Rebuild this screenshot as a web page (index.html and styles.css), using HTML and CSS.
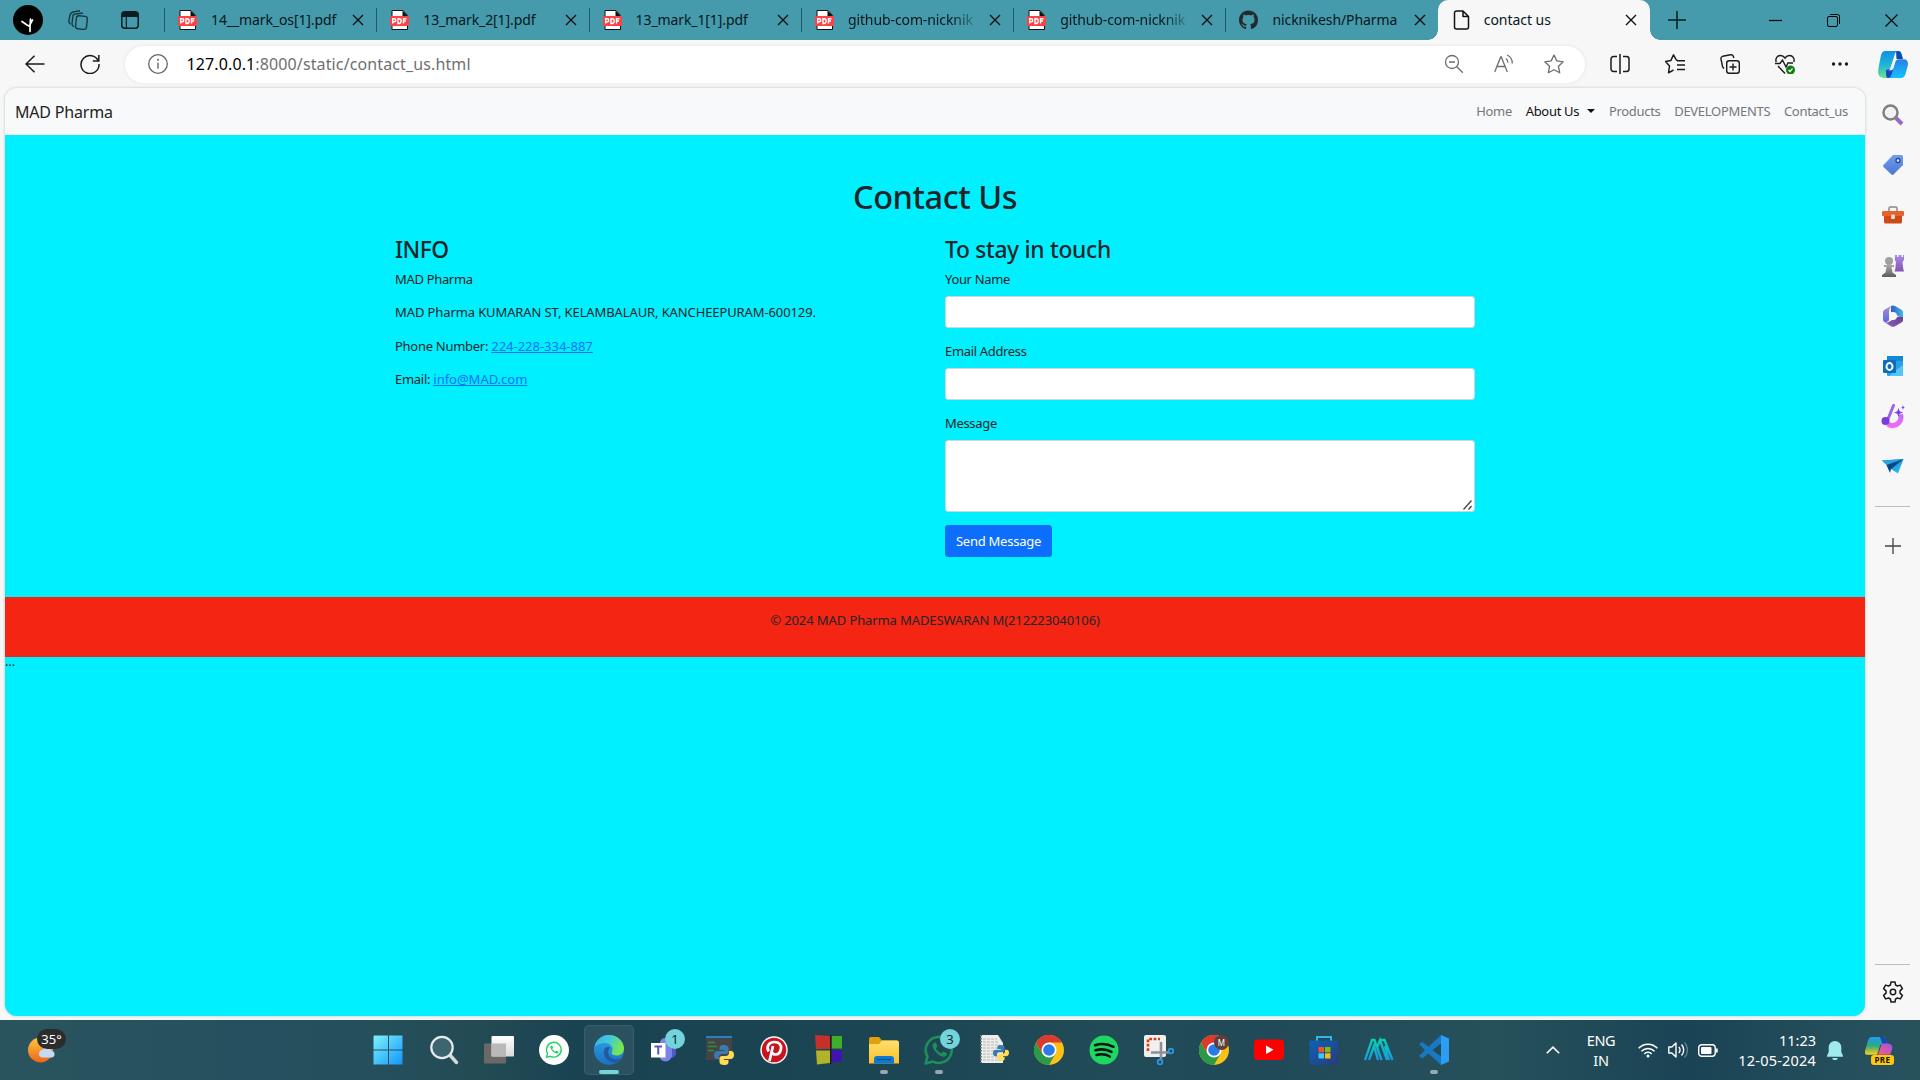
FILE: index.html
```html
<!DOCTYPE html>
<html lang="en">
<head>
<meta charset="utf-8">
<title>contact us</title>
<link rel="stylesheet" href="styles.css">
</head>
<body>
<svg class="defs" width="0" height="0">
  <defs>
    <linearGradient id="gWin" x1="0" y1="0" x2="1" y2="1"><stop offset="0" stop-color="#7df3fc"/><stop offset="1" stop-color="#1196fb"/></linearGradient>
    <linearGradient id="gSun" x1="0" y1="0" x2="0" y2="1"><stop offset="0" stop-color="#fbc93c"/><stop offset="1" stop-color="#f0641a"/></linearGradient>
    <linearGradient id="gEdgeTop" x1="0" y1="0" x2="1" y2=".4"><stop offset="0" stop-color="#2aa4e8"/><stop offset=".5" stop-color="#31c5d4"/><stop offset="1" stop-color="#6be63f"/></linearGradient>
    <linearGradient id="gEdgeLow" x1="0" y1="0" x2="0" y2="1"><stop offset="0" stop-color="#1aa0e6"/><stop offset="1" stop-color="#0a63bd"/></linearGradient>
    <linearGradient id="gCopA" x1="0" y1="0" x2="0" y2="1"><stop offset="0" stop-color="#0f8fe4"/><stop offset=".5" stop-color="#1cb5d8"/><stop offset="1" stop-color="#6ee38a"/></linearGradient>
    <linearGradient id="gCopB" x1="0" y1="0" x2="0" y2="1"><stop offset="0" stop-color="#2a7fe4"/><stop offset="1" stop-color="#12c3fb"/></linearGradient>
    <linearGradient id="gCopC" x1="0" y1="0" x2="0" y2="1"><stop offset="0" stop-color="#199ff0"/><stop offset=".5" stop-color="#2fa884"/><stop offset="1" stop-color="#ffd015"/></linearGradient>
    <linearGradient id="gCopD" x1="1" y1="0" x2="0" y2="1"><stop offset="0" stop-color="#9a55f0"/><stop offset="1" stop-color="#ff5a78"/></linearGradient>
    <linearGradient id="gTag" x1="0" y1="0" x2="0" y2="1"><stop offset="0" stop-color="#6f9df0"/><stop offset="1" stop-color="#4d78d0"/></linearGradient>
    <linearGradient id="gGray" x1="0" y1="0" x2="0" y2="1"><stop offset="0" stop-color="#aaa"/><stop offset="1" stop-color="#5c5c5c"/></linearGradient>
    <linearGradient id="gPurple" x1="0" y1="0" x2="0" y2="1"><stop offset="0" stop-color="#a98be6"/><stop offset="1" stop-color="#7f55b0"/></linearGradient>
    <linearGradient id="gBrush" x1="0" y1="0" x2="0" y2="1"><stop offset="0" stop-color="#c070f4"/><stop offset="1" stop-color="#f06af4"/></linearGradient>
    <linearGradient id="gPlane" x1="0" y1="0" x2="1" y2="1"><stop offset="0" stop-color="#0a6fc0"/><stop offset="1" stop-color="#35c8f8"/></linearGradient>
    <linearGradient id="gFolder" x1="0" y1="0" x2="0" y2="1"><stop offset="0" stop-color="#ffdf6c"/><stop offset="1" stop-color="#fbc02a"/></linearGradient>
    <linearGradient id="gStore" x1="0" y1="0" x2="1" y2="1"><stop offset="0" stop-color="#0b63b8"/><stop offset="1" stop-color="#2a3a78"/></linearGradient>
    <linearGradient id="gMa" x1="0" y1="0" x2="0" y2="1"><stop offset="0" stop-color="#08d0b4"/><stop offset="1" stop-color="#1899e0"/></linearGradient>
    <linearGradient id="gGreyView" x1="0" y1="0" x2="0" y2="1"><stop offset="0" stop-color="#fff"/><stop offset="1" stop-color="#dadada"/></linearGradient>
    <linearGradient id="gLoopA" x1="0" y1="0" x2="1" y2="0"><stop offset="0" stop-color="#2c5fc0"/><stop offset="1" stop-color="#45b4ee"/></linearGradient>
    <linearGradient id="gLoopB" x1="0" y1="0" x2="0" y2="1"><stop offset="0" stop-color="#b08ae0"/><stop offset="1" stop-color="#5a6ad8"/></linearGradient>
    <linearGradient id="gLoopC" x1="0" y1="1" x2="1" y2="0"><stop offset="0" stop-color="#8a60c8"/><stop offset="1" stop-color="#6a3f86"/></linearGradient>
    <symbol id="pdf" viewBox="0 0 19 20"><path d="M2 .5h11l4.500 5V19.500H2z" fill="#fff" stroke="#111"/><path d="M12.500.5v5.500H17.500z" fill="#111"/><rect y="6" width="19" height="10" rx="1" fill="#fb4347"/><path d="M2.700 13.500V8.700h1.600a1.400 1.400 0 0 1 0 3H2.700M8 8.700h1a2.200 2.400 0 0 1 0 4.800H8zM13.500 13.500V8.700h3M13.500 11h2.500" fill="none" stroke="#fff" stroke-width="1.400"/></symbol>
    <symbol id="x" viewBox="0 0 12 12"><path d="M1 1l10 10M11 1L1 11" stroke="#111" stroke-width="1.400" fill="none"/></symbol>
    <symbol id="python" viewBox="0 0 20 20"><path d="M9.800 0C6 0 5.500 1.500 5.500 3v2H10v1H3.500C1.500 6 0 7.500 0 10s1 4 3 4h2v-2.500C5.500 10 6.500 9 8 9h4c1.500 0 2.500-1 2.500-2.500V3C14.500 1 13 0 9.800 0z" fill="#3a7ab0"/><path d="M10.200 20c3.800 0 4.300-1.500 4.300-3v-2H10v-1h6.500c2 0 3.500-1.500 3.500-4s-1-4-3-4h-2v2.500C14.500 10 13.500 11 12 11H8c-1.500 0-2.500 1-2.500 2.500V17c0 2 1.500 3 4.700 3z" fill="#ffdc50"/></symbol>
    <symbol id="chrome" viewBox="0 0 30 30"><circle cx="15" cy="15" r="15" fill="#fbc116"/><path d="M2 7.500A15 15 0 0 0 15 30l6.500-11.250L15 15 8.500 18.750z" fill="#2a9a4a"/><path d="M2 7.500A15 15 0 0 1 28 7.500H15L8.500 18.750z" fill="#dd3a2e"/><circle cx="15" cy="15" r="7.500" fill="#fff"/><circle cx="15" cy="15" r="5.800" fill="#2a7bea"/></symbol>
    <symbol id="wa" viewBox="0 0 30 30"><path d="M1.500 28.500l2-7A13 13 0 1 1 9 26.600z" fill="none" stroke="currentColor" stroke-width="2.600" stroke-linejoin="round"/><path d="M10.500 7.500c-3 1.500-2 5 .5 8.500 3 4 7 6.500 10 5.500 2-1 2.300-3 1.500-3.500l-3-1.500c-1 0-1.300 1.500-2 1.700-1.500 0-5-3-5.500-5 .2-.8 1.500-1.200 1.300-2.200l-1.300-3.200z" fill="currentColor"/></symbol>
  </defs>
</svg>

<header class="tabstrip">
  <div class="tabstrip-lead">
    <svg class="avatar" viewBox="0 0 30 30"><circle cx="15" cy="15" r="15" fill="#000"/><path d="M17 26.500V22l.5-8M17 21.500L14 20 9 16.500M17 19.500l2.500-4.500" stroke="#fff" stroke-width="1.700" fill="none" stroke-linecap="round"/></svg>
    <svg class="i-work" viewBox="0 0 22 20" fill="none" stroke="#173a44" stroke-width="1.400"><rect x="9" y="6" width="11" height="13" rx="2.500" transform="rotate(6 14 12)"/><path d="M7 16.500C5 16 5 15 5 14l.8-7.500C6 4.500 7 4 8.500 4L16 3M3.500 14C1.500 13 1.500 12 2 10l1-5c.4-2 1-2.500 3-3L13 .8"/></svg>
    <svg class="i-tabs" viewBox="0 0 18 18"><rect x=".8" y=".8" width="16.400" height="16.400" rx="3" fill="none" stroke="#0b1d22" stroke-width="1.500"/><path d="M1 6V3.500A2.500 2.500 0 0 1 3.500 1h11A2.500 2.500 0 0 1 17 3.500V6z" fill="#0b1d22"/><path d="M5.300 6v11" stroke="#0b1d22" stroke-width="1.200"/></svg>
  </div>
  <div class="tab"><svg class="pdf"><use href="#pdf"/></svg><span class="tab-title">14__mark_os[1].pdf</span><svg class="x"><use href="#x"/></svg></div>
  <div class="tab"><svg class="pdf"><use href="#pdf"/></svg><span class="tab-title">13_mark_2[1].pdf</span><svg class="x"><use href="#x"/></svg></div>
  <div class="tab"><svg class="pdf"><use href="#pdf"/></svg><span class="tab-title">13_mark_1[1].pdf</span><svg class="x"><use href="#x"/></svg></div>
  <div class="tab"><svg class="pdf"><use href="#pdf"/></svg><span class="tab-title fade">github-com-nicknik</span><svg class="x"><use href="#x"/></svg></div>
  <div class="tab"><svg class="pdf"><use href="#pdf"/></svg><span class="tab-title fade">github-com-nicknik</span><svg class="x"><use href="#x"/></svg></div>
  <div class="tab"><svg class="pdf" viewBox="0 0 16 16"><path fill="#24292f" d="M8 0C3.580 0 0 3.580 0 8c0 3.540 2.290 6.530 5.470 7.590.4.070.55-.17.55-.38 0-.19-.01-.82-.01-1.490-2.010.37-2.530-.49-2.690-.94-.09-.23-.48-.94-.82-1.130-.28-.15-.68-.52-.01-.53.63-.01 1.080.58 1.230.82.72 1.210 1.870.87 2.330.66.07-.52.28-.87.51-1.070-1.780-.2-3.640-.89-3.640-3.950 0-.87.31-1.590.82-2.150-.08-.2-.36-1.020.08-2.120 0 0 .67-.21 2.200.82.64-.18 1.320-.27 2-.27s1.360.09 2 .27c1.530-1.040 2.200-.82 2.200-.82.44 1.100.16 1.920.08 2.120.51.56.82 1.270.82 2.150 0 3.070-1.870 3.750-3.650 3.950.29.25.54.73.54 1.480 0 1.070-.01 1.930-.01 2.200 0 .21.15.46.55.38A8.010 8.010 0 0 0 16 8c0-4.420-3.580-8-8-8z"/></svg><span class="tab-title">nicknikesh/Pharma</span><svg class="x"><use href="#x"/></svg></div>
  <div class="tab active"><svg class="pdf" viewBox="0 0 19 20"><path d="M4.500 1H11l5.500 5.500V17a2 2 0 0 1-2 2h-10a2 2 0 0 1-2-2V3a2 2 0 0 1 2-2zM11 1v5.500h5.500" fill="none" stroke="#111" stroke-width="1.500" stroke-linejoin="round"/></svg><span class="tab-title">contact us</span><svg class="x"><use href="#x"/></svg></div>
  <svg class="i-plus" viewBox="0 0 18 18"><path d="M9 0v18M0 9h18" stroke="#0b1d22" stroke-width="1.500"/></svg>
  <div class="winctl">
    <svg viewBox="0 0 13 13"><path d="M0 6.500h13" stroke="#000" stroke-width="1.200"/></svg>
    <svg viewBox="0 0 13 13" fill="none" stroke="#000"><rect x=".5" y="2.500" width="10" height="10" rx="1.500"/><path d="M3 .5h7.500a2 2 0 0 1 2 2V10"/></svg>
    <svg viewBox="0 0 13 13"><path d="M.5.5l12 12M12.500.5l-12 12" stroke="#000" stroke-width="1.100"/></svg>
  </div>
</header>

<div class="toolbar">
  <svg class="i-back" viewBox="0 0 20 18"><path d="M19.500 9H1M9.500.7L1 9l8.500 8.300" fill="none" stroke="#1b1b1b" stroke-width="1.500"/></svg>
  <svg class="i-reload" viewBox="0 0 20 20"><path d="M18.300 7A9 9 0 1 0 19 10M18.800 1v6h-6" fill="none" stroke="#1b1b1b" stroke-width="1.500"/></svg>
  <div class="omnibox">
    <svg class="i-info" viewBox="0 0 20 20"><circle cx="10" cy="10" r="9.300" fill="none" stroke="#666" stroke-width="1.300"/><path d="M10 8.700v6" stroke="#666" stroke-width="1.400"/><circle cx="10" cy="5.800" r="1" fill="#666"/></svg>
    <span class="url"><i>127.0.0.1</i>:8000/static/contact_us.html</span>
    <svg viewBox="0 0 20 20" fill="none" stroke="#6e6e6e" stroke-width="1.300"><circle cx="8" cy="8" r="6.500"/><path d="M5 8h6M12.800 12.800l6 6"/></svg>
    <svg viewBox="0 0 20 20" fill="none" stroke="#6e6e6e" stroke-width="1.300"><path d="M.7 18L6.700 3h.6l6 15M3 12.500h8M12 4.500c1.200 1 1.800 2.300 1.800 4M13 1c3.500 1.500 5.300 4.500 5.300 8.500"/></svg>
    <svg viewBox="0 0 20 20" fill="none" stroke="#6e6e6e" stroke-width="1.300" stroke-linejoin="round"><path d="M10 1l2.800 5.900 6.400.9-4.700 4.500 1.200 6.500-5.700-3.100-5.700 3.100 1.200-6.500L.8 7.800l6.400-.9z"/></svg>
  </div>
  <div class="tools">
    <svg viewBox="0 0 20 20" fill="none" stroke="#1b1b1b" stroke-width="1.500"><path d="M7 2.500H3.500a2.500 2.500 0 0 0-2.500 2.500v10a2.500 2.500 0 0 0 2.500 2.500H7M13 2.500h3.500A2.500 2.500 0 0 1 19 5v10a2.500 2.500 0 0 1-2.500 2.500H13M10 0v20"/></svg>
    <svg viewBox="0 0 20 20" fill="none" stroke="#1b1b1b" stroke-width="1.500" stroke-linejoin="round"><path d="M12.500 6.200l-1.200-.2L8.500.8 5.800 6.600.5 7.500l4 4.500-1 6.800L8.500 16M12 6.700h8M12 11h8M12 15.500h8"/></svg>
    <svg viewBox="0 0 20 20" fill="none" stroke="#1b1b1b" stroke-width="1.400"><rect x="6.700" y="6.700" width="12.600" height="12.600" rx="2.500"/><path d="M13 9.500v7M9.500 13h7M4 14.500L2.600 13 1 5.200c-.3-1.500.3-2.500 1.700-2.900L10.500.8c1.500-.3 2.500.5 2.900 1.700l.4 1.500"/></svg>
    <svg viewBox="0 0 20 20" fill="none" stroke="#1b1b1b" stroke-width="1.400"><path d="M1.200 8C0 4.500 2.500 1.500 5.300 1.500 7.500 1.500 9 2.500 10 4c1-1.500 2.500-2.500 4.700-2.500 2.800 0 5.300 3 4.100 6.500M0 9.500h5L7.500 6l3.500 7 2-4h5M3 12l7 7.500"/><circle cx="15.500" cy="16" r="4.500" fill="#107c10" stroke="none"/><path d="M13.500 16l1.500 1.500 2.500-3" stroke="#fff" stroke-width="1.200"/></svg>
    <svg viewBox="0 0 20 20" fill="#1b1b1b"><circle cx="3.500" cy="10" r="1.700"/><circle cx="10" cy="10" r="1.700"/><circle cx="16.500" cy="10" r="1.700"/></svg>
  </div>
  <svg class="copilot" viewBox="0 0 30 27"><path d="M18 0h2.500c1.500 0 2.500 1 3 2.800L25 8h-6.500z" fill="#0b4fae"/><path d="M8 27h3c2 0 3-1 3.500-3l2-7-6 1H7.500z" fill="#1746c8"/><path d="M7 0h12.500c-1.500.5-2.300 1.700-2.800 3.500L13 15.500c-.7 2-1.800 3-3.500 3C7 18.500 7 24 9.500 27 6 27 1 27.500.2 22.500-.2 19.500 1.500 12 2.600 6 3.400 2 4.500 0 7 0z" fill="url(#gCopA)"/><path d="M23 27H10.500c1.500-.5 2.500-1.700 3-3.500L17 11.500c.7-2.300 1.800-3.300 3.500-3.300h5.200c3.500 0 4.800 2.500 4.100 6.300l-2 7.500C27 25.500 25.500 27 23 27z" fill="url(#gCopB)"/><path d="M16.500 8.200h4c-1.800.2-2.800 1.300-3.500 3.300l-2 6.500c-.5 1-1.200 1.300-2.200 1.300h-3c1.800-.3 2.700-1.300 3.200-2.800l2-6.300c.4-1.200.9-1.800 1.500-2z" fill="#f7f7f7"/></svg>
</div>

<div class="middle">
  <main class="page">
    <nav class="navbar">
      <span class="brand">MAD Pharma</span>
      <div class="links"><a>Home</a><a class="on">About Us</a><a>Products</a><a>DEVELOPMENTS</a><a>Contact_us</a></div>
    </nav>
    <section class="contact">
      <h1>Contact Us</h1>
      <div class="cols">
        <div class="col">
          <h2 class="info">INFO</h2>
          <p class="label">MAD Pharma</p>
          <p class="address">MAD Pharma KUMARAN ST, KELAMBALAUR, KANCHEEPURAM-600129.</p>
          <p><span class="key">Phone Number: </span><a>224-228-334-887</a></p>
          <p><span class="key">Email: </span><a>info@MAD.com</a></p>
        </div>
        <form class="col">
          <h2>To stay in touch</h2>
          <label class="label">Your Name</label><input type="text">
          <label class="label">Email Address</label><input type="text">
          <label class="label">Message</label>
          <div class="area"><textarea></textarea><svg class="grip" viewBox="0 0 10 10"><path d="M.5 9.500l8-9M5.500 9.500l3-3.500" stroke="#444" stroke-width="1.300"/></svg></div>
          <button type="button">Send Message</button>
        </form>
      </div>
    </section>
    <footer>© 2024 MAD Pharma MADESWARAN M(212223040106)</footer>
    <div class="rest">...</div>
  </main>
  <aside class="sidebar">
    <svg viewBox="0 0 22 22"><path d="M14 14l6 6" stroke="#9a68cc" stroke-width="4"/><circle cx="8.500" cy="8.500" r="7" fill="#f2f2f2" stroke="#808080" stroke-width="2.500"/></svg>
    <svg viewBox="0 0 22 22"><path d="M11 1h8.500A1.500 1.500 0 0 1 21 2.500V11L11.500 20.500a1.500 1.500 0 0 1-2 0L1.500 13a1.500 1.500 0 0 1 0-2z" fill="url(#gTag)"/><circle cx="16" cy="6.500" r="2" fill="#e4ebfa" stroke="#27459b" stroke-width="1.300"/></svg>
    <svg viewBox="0 0 22 22"><path d="M7 7V4.500C7 3.500 7.500 3 8.500 3h5c1 0 1.500.5 1.500 1.500V7" fill="none" stroke="#888" stroke-width="1.500"/><rect y="7" width="22" height="5" rx="1" fill="#e8622c"/><path d="M2 12h18v6a1.500 1.500 0 0 1-1.500 1.500h-15A1.500 1.500 0 0 1 2 18z" fill="#d04a14"/><rect x="9" y="10.500" width="4" height="4.500" rx="1" fill="#d9d9d9"/></svg>
    <svg viewBox="0 0 22 22"><path d="M13 0h2v2h1.500V0h3v2H21V0h1v5l-1.500 2 .8 7 .7 2.500H12.500L13.300 14l.7-7-1.200-2z" fill="url(#gPurple)"/><circle cx="7" cy="6" r="4" fill="#a0a0a0"/><path d="M2 10h10v2H9.500l1 5.500 3.500 2.500V22H0v-2l3.500-2.500L4.500 12H2z" fill="url(#gGray)"/></svg>
    <svg viewBox="0 0 22 22"><path d="M9 1.200C10 .3 12 .3 13 1l6.500 3.700C20.500 5.300 21 6 21 7v7l-7-4-5-3z" fill="url(#gLoopA)"/><path d="M2.500 4.700L9.500.7C7.500 3 7 5 7 7.500v8l-3 2C2 17.500 1 16 1 14.500V7.500c0-1.200.5-2.200 1.500-2.800z" fill="url(#gLoopB)"/><path d="M21 12v3c0 1-.5 2-1.500 2.600L13 21.300c-1.200.7-2.800.7-4 0l-6-3.800c2 .3 3.500-.3 5-1.200l7-4.300z" fill="url(#gLoopC)"/><circle cx="11" cy="11" r="4" fill="#f7f7f7"/></svg>
    <svg viewBox="0 0 22 22"><rect x="5" y="1" width="16" height="20" rx="1" fill="#28a0e4"/><path d="M5 1h16v5H5z" fill="#1488d4"/><path d="M14 15l7-5v11H7z" fill="#54c6f4"/><rect x="1" y="5" width="13" height="13" rx="1" fill="#0b6cc4"/><ellipse cx="7.500" cy="11.500" rx="3" ry="3.500" fill="none" stroke="#fff" stroke-width="1.900"/></svg>
    <svg class="wide" viewBox="0 0 24 24"><path d="M7 20c3 2.500 8 2 11-1.500 2-2.300 2.500-5 1.500-8" fill="none" stroke="url(#gBrush)" stroke-width="5"/><path d="M12.500 1.500L7 15" stroke="#9b63ee" stroke-width="3" stroke-linecap="round"/><circle cx="4.500" cy="17" r="4" fill="#7a3ae0"/><path d="M17.500 4l1.200 3.300L22 8.500l-3.300 1.200-1.200 3.300-1.200-3.300L13 8.500l3.300-1.200zM22 1l.6 1.900 1.400.6-1.400.6L22 6l-.6-1.900L20 3.500l1.400-.6z" fill="#7d3df0"/></svg>
    <svg viewBox="0 0 22 22"><path d="M0 5.500L21.500 4 16 18.500 9 14z" fill="url(#gPlane)"/><path d="M0 5.500L21.500 4 7 12z" fill="#2ba4e0"/><path d="M4.500 10L21.500 4 9 14l-1 4z" fill="#0a4686"/></svg>
    <hr>
    <svg class="add" viewBox="0 0 16 16"><path d="M8 0v16M0 8h16" stroke="#444" stroke-width="1.300"/></svg>
    <div class="grow"></div>
    <hr>
    <svg class="gear" viewBox="0 0 22 22" fill="none" stroke="#1b1b1b" stroke-width="1.500" stroke-linejoin="round"><circle cx="11" cy="11" r="2.700"/><path d="M9 1h4l.6 3 1.800 1 3-.9 2 3.500L18 9.900v2.200l2.400 2.300-2 3.500-3-.9-1.800 1L13 21H9l-.6-3-1.800-1-3 .9-2-3.500L4 12.100V9.900L1.600 7.600l2-3.500 3 .9 1.800-1z"/></svg>
  </aside>
</div>

<footer class="taskbar">
  <div class="weather"><svg viewBox="0 0 28 26"><circle cx="12.500" cy="13" r="12.500" fill="url(#gSun)"/><path d="M14 20.500a3.800 3.800 0 0 1 .5-7.500 5 5 0 0 1 9 1 3.300 3.300 0 0 1 .5 6.500z" fill="#c4d8f8"/></svg><span class="temp">35°</span></div>
  <div class="apps">
    <div class="app"><svg class="win" viewBox="0 0 30 30" fill="url(#gWin)"><path d="M1.500.5H15v14H.5v-13zM16 .5h13.500v14H16zM.5 15.500H15v14H.5zM16 15.500h13.500v14H16z"/></svg></div>
    <div class="app"><svg viewBox="0 0 30 30"><path d="M20 19l7.500 8.500" stroke="#d6d9da" stroke-width="3.500" stroke-linecap="round"/><circle cx="13" cy="12.500" r="10.700" fill="#3d656f" stroke="#e9ecec" stroke-width="2.200"/></svg></div>
    <div class="app"><svg viewBox="0 0 30 30"><rect x="0" y="8.500" width="22" height="20" rx="1" fill="#6b6867"/><rect x="7.500" y="1" width="22.500" height="20.500" rx="1" fill="url(#gGreyView)"/><path d="M7.500 8.500H22v13H7.500z" fill="#b9b9b9"/></svg></div>
    <div class="app"><svg viewBox="0 0 30 30"><circle cx="15" cy="15" r="15" fill="#fff"/><svg x="6.500" y="6" width="17" height="17.500" color="#25d366"><use href="#wa"/></svg></svg></div>
    <div class="app current"><svg viewBox="0 0 30 30"><circle cx="15" cy="15" r="15" fill="url(#gEdgeLow)"/><path d="M.5 12C2 4.500 8 0 15 0c8 0 15 6 15 13.500 0 4.500-3.500 7-7.500 7-3 0-5-1.200-5-2.500 0-1 1-1.500 1-4 0-3-3-6-7.500-6C6.500 8 2.500 10 .5 12z" fill="url(#gEdgeTop)"/><path d="M10.500 14C8 20 13 27 20 27.500c3 0 5.500-2 7.500-4-4 1.500-11 1.500-13-4-.8-2.500 0-5.500 1.500-7-2.500-1-5 0-5.500 1.500z" fill="#114a9c"/></svg><i class="run"></i></div>
    <div class="app"><svg viewBox="0 0 30 30"><circle cx="16" cy="8" r="5" fill="#7b83eb"/><path d="M19 10h8v8a5 5 0 0 1-5 5h-3z" fill="#5059c9"/><path d="M10 10h13v10a6.500 6.500 0 0 1-13 0z" fill="#7b83eb"/><rect x="2" y="8" width="14.500" height="14.500" fill="#fff"/><path d="M5.500 11.500h7.500M9.250 11.500v8" stroke="#5059c9" stroke-width="2"/></svg><span class="badge">1</span></div>
    <div class="app"><svg viewBox="0 0 30 30"><rect x="2" y="2" width="26" height="23" fill="#444"/><rect x="2" y="1" width="26" height="2" fill="#2f7fc0"/><path d="M4 7.500h7M4 11.500h9M4 15.500h6" stroke="#2f8a3c" stroke-width="1.300"/><svg x="10" y="10" width="20" height="20"><use href="#python"/></svg></svg></div>
    <div class="app"><svg viewBox="0 0 30 30"><circle cx="15" cy="15" r="13.700" fill="#fff"/><circle cx="15" cy="15" r="12.300" fill="#c8141d"/><path d="M14 11l-3.500 15M9.700 16.500C7 12 9.500 7 15.500 7c4.500 0 7 3 6.500 6.500-.5 4-3 6-5.500 6-1.700 0-2.800-.8-3.200-2" fill="none" stroke="#fff" stroke-width="2.700"/></svg></div>
    <div class="app"><svg viewBox="0 0 30 30"><path d="M1 0l15 1v13L2 14z" fill="#c6302c"/><path d="M17.500 1H28v12.500H17.500z" fill="#3fae2c"/><path d="M2 15.500h14V28L3 29.500z" fill="#b3b32a"/><path d="M17.500 15H28v11l-10.500 2z" fill="#4114b0"/><path d="M16 0h1.500v29H16z" fill="#1c1c1c"/></svg></div>
    <div class="app"><svg viewBox="0 0 30 30"><path d="M0 4a2 2 0 0 1 2-2h8l3 3.500h15v6H0z" fill="#dfa00c"/><path d="M0 9h10l3-3.500h15a2 2 0 0 1 2 2V28.500H0z" fill="url(#gFolder)"/><path d="M5 28.500V24a3 3 0 0 1 3-3h14a3 3 0 0 1 3 3v4.500z" fill="#0b7ad4"/><path d="M8 24.500h14" stroke="#0a4f92" stroke-width="1.200"/></svg><i class="run dim"></i></div>
    <div class="app"><svg viewBox="0 0 30 30" color="#1e8f58"><use href="#wa"/></svg><span class="badge">3</span><i class="run dim"></i></div>
    <div class="app"><svg viewBox="0 0 30 30"><path d="M2 0h17l5 8v20H2z" fill="#ededed"/><path d="M4 4h14M4 7h16M4 10h17M4 13h18M4 16h12M4 19h14M4 22h17M4 25h18" stroke="#b8b8b8" stroke-dasharray="3 1"/><path d="M2 0v28" stroke="#777" stroke-dasharray="1.500 1.500" stroke-width="2"/><svg x="14" y="10" width="16" height="16"><use href="#python"/></svg></svg></div>
    <div class="app"><svg><use href="#chrome"/></svg></div>
    <div class="app"><svg viewBox="0 0 30 30"><circle cx="15" cy="15" r="14.500" fill="#1ed760"/><path d="M6 10.200c6-1.800 13-1.300 18.500 1.600M6.500 15.300c5.500-1.500 11.500-1 16 1.600M7.500 20c4.500-1.100 9.500-.7 13.300 1.500" fill="none" stroke="#111" stroke-width="2.500" stroke-linecap="round"/></svg></div>
    <div class="app"><svg viewBox="0 0 30 30"><rect width="22" height="22" rx="2" fill="#f0f0f0"/><path d="M4 16V4h12" fill="none" stroke="#d8400a" stroke-width="2.600" stroke-dasharray="2.800 1.600"/><path d="M17 7v17M7 17.500h18" stroke="#8a9096" stroke-width="2.600"/><circle cx="27" cy="16" r="2.400" fill="none" stroke="#2a9ae8" stroke-width="1.700"/><circle cx="16" cy="27" r="2.400" fill="none" stroke="#2a9ae8" stroke-width="1.700"/></svg></div>
    <div class="app"><svg><use href="#chrome"/></svg><span class="who">M</span></div>
    <div class="app"><svg viewBox="0 0 30 30"><rect y="4.500" width="30" height="20.500" rx="4" fill="#f00"/><path d="M12 10.500l7.500 4.300-7.500 4.300z" fill="#fff"/></svg></div>
    <div class="app"><svg viewBox="0 0 30 30"><path d="M8 6V2h14v4" fill="none" stroke="#2fb4f0" stroke-width="2"/><path d="M.5 5.500h29V26a4 4 0 0 1-4 4h-21a4 4 0 0 1-4-4z" fill="url(#gStore)"/><path d="M9.500 12H15v5.300H9.500z" fill="#f35325"/><path d="M16 12h5.500v5.300H16z" fill="#81bc06"/><path d="M9.500 18.300H15v5.200H9.500z" fill="#3cc8fa"/><path d="M16 18.300h5.500v5.200H16z" fill="#ffba08"/></svg></div>
    <div class="app"><svg viewBox="0 0 30 30" fill="none" stroke="url(#gMa)" stroke-width="2.300"><path d="M1 25L8 5h2.500l7 20M5 25l5-14 4 14M13 13l3-8 7 20M17 5h3.500l8 20M21 11l4 14"/></svg></div>
    <div class="app"><svg viewBox="0 0 30 30"><path d="M22 0L9.500 11.700 3.500 7 0 9l6 6-6 6 3.500 2.500 6-5L22 30z" fill="#1a78c2"/><path d="M22 8.500L13.500 15 22 21.500z" fill="#214b58"/><path d="M22 0l8 3.500v23L22 30z" fill="#2a9df4"/></svg><i class="run dim"></i></div>
  </div>
  <div class="tray">
    <svg class="chev" viewBox="0 0 14 8"><path d="M.8 7.300L7 1.200l6.200 6.100" fill="none" stroke="#fff" stroke-width="1.600"/></svg>
    <div class="lang">ENG<br>IN</div>
    <svg class="wifi" viewBox="0 0 20 16" fill="none" stroke="#fff" stroke-width="1.500"><path d="M.6 6.300a13 13 0 0 1 18.800 0M3.500 9.200a9 9 0 0 1 13 0M6.300 12a5 5 0 0 1 7.400 0"/><circle cx="10" cy="14" r="1.500" fill="#fff" stroke="none"/></svg>
    <svg class="vol" viewBox="0 0 20 16" fill="none" stroke="#fff" stroke-width="1.400"><path d="M.8 5h3L8 1v14l-4.200-4h-3z" stroke-linejoin="round"/><path d="M10.700 5a4 4 0 0 1 0 6M13.500 2.500a8 8 0 0 1 0 11"/><path d="M16.500.5a11 11 0 0 1 0 15" stroke="#58808a"/></svg>
    <svg class="bat" viewBox="0 0 20 13"><rect x=".7" y=".7" width="16.500" height="11.600" rx="3" fill="none" stroke="#fff" stroke-width="1.400"/><rect x="3" y="3" width="10.500" height="7" rx="1" fill="#fff"/><path d="M18.700 4.500v4" stroke="#fff" stroke-width="2"/></svg>
    <div class="clock">11:23<br><span class="date">12-05-2024</span></div>
    <svg class="bell" viewBox="0 0 16 19"><path d="M8 0a6.300 6.300 0 0 1 6.300 6.300V11L16 14.800v1H0v-1L1.700 11V6.300A6.300 6.300 0 0 1 8 0zM5.300 17h5.400a2.700 2.200 0 0 1-5.400 0z" fill="#a0e9ec"/></svg>
    <div class="pre"><svg viewBox="0 0 30 27"><path d="M7 0h12c2 0 3 1 3.500 3L24 8h-5c-2 0-3 1-3.500 3L13 19H2C0 19-.5 17 .3 14L3 4.500C4 1.500 5 0 7 0z" fill="url(#gCopC)"/><path d="M16 0h3c2 0 3 1 3.500 3L24 8h-5z" fill="#1a44b8"/><path d="M14 19l3-9c1-2.500 2-3 5-3 6 0 8 2 7 6l-2 6z" fill="url(#gCopD)"/></svg><span>PRE</span></div>
  </div>
</footer>
</body>
</html>
```
FILE: styles.css
```css
* { box-sizing: border-box; }
body { margin: 0; width: 1920px; height: 1080px; overflow: hidden; display: flex; flex-direction: column; background: #f7f7f7; font-family: "Noto Sans", "Open Sans", sans-serif; color: #212529; }
i { font-style: normal; }
svg { display: block; flex: none; }
.defs { position: absolute; }

/* tab strip */
.tabstrip { height: 40px; flex: none; display: flex; align-items: center; background: #459aac; }
.tabstrip-lead { width: 164px; height: 40px; display: flex; align-items: center; padding-left: 13px; }
.avatar { width: 30px; height: 30px; }
.i-work { width: 22px; height: 20px; margin-left: 24px; }
.i-tabs { width: 18px; height: 18px; margin-left: 32px; }
.tab { width: 212.300px; height: 40px; flex: none; display: flex; align-items: center; padding: 0 12px 0 13px; border-left: 1px solid transparent; background: linear-gradient(#1f5b68, #1f5b68) 0 50% / 1px 24px no-repeat border-box; }
.pdf { width: 19px; height: 20px; }
.x { width: 12px; height: 12px; }
.tab-title { flex: 1; white-space: nowrap; margin: 0 9px 0 14px; font-size: 14px; line-height: 24px; letter-spacing: -.1px; color: #08171b; }
.fade { -webkit-mask-image: linear-gradient(90deg, #000 78%, transparent 101%); mask-image: linear-gradient(90deg, #000 78%, transparent 101%); }
.tab.active { background: #f7f7f7; border-radius: 10px 10px 0 0; position: relative; padding-right: 13px; }
.tab.active .tab-title { letter-spacing: -.05px; margin-left: 13px; }
.tab.active::before, .tab.active::after { content: ""; position: absolute; bottom: 0; width: 10px; height: 10px; }
.tab.active::before { left: -11px; background: radial-gradient(circle at 0 0, #459aac 9.500px, #f7f7f7 10px); }
.tab.active::after { right: -10px; background: radial-gradient(circle at 100% 0, #459aac 9.500px, #f7f7f7 10px); }
.i-plus { width: 18px; height: 18px; margin-left: 18px; }
.winctl { margin-left: auto; display: flex; gap: 45px; padding-right: 22px; }
.winctl svg { width: 13px; height: 13px; }

/* address bar */
.toolbar { height: 47px; flex: none; display: flex; align-items: center; padding: 1px 12px 0 25px; }
.i-back { width: 20px; height: 18px; }
.i-reload { width: 20px; height: 20px; margin-left: 35px; }
.omnibox { width: 1460px; height: 37px; margin-left: 25px; border-radius: 19px; background: #fff; box-shadow: 0 0 3px 1px #ececec; display: flex; align-items: center; padding: 0 21px 0 22.500px; gap: 30px; }
.omnibox svg { width: 20px; height: 20px; }
.url { flex: 1; margin-left: -11px; font-size: 16px; line-height: 24px; letter-spacing: .12px; color: #6f6f6f; }
.url i { color: #000; }
.tools { display: flex; gap: 35px; margin-left: 25px; }
.tools svg { width: 20px; height: 20px; }
.copilot { width: 30px; height: 27px; margin-left: auto; }

/* viewport and side panel */
.middle { flex: 1; min-height: 0; display: flex; padding: 1px 0 4px 5px; }
.page { width: 1860px; border-radius: 12px; overflow: hidden; background: #00f0ff linear-gradient(#f8f9fa, #f8f9fa) 0 0 / 100% 24px no-repeat; box-shadow: 0 0 3px #bdbdbd; font-size: 13px; line-height: 20px; letter-spacing: -.13px; display: flex; flex-direction: column; }
.navbar { height: 47px; flex: none; display: flex; align-items: center; justify-content: space-between; background: #f8f9fa; padding: 0 17px 1px 10px; }
.brand { font-size: 16px; letter-spacing: -.2px; color: #222; padding-top: 1px; }
.links { display: flex; gap: 13.700px; letter-spacing: -.3px; color: #767778; }
.links .on { color: #111; display: flex; align-items: center; }
.on::after { content: ""; margin-left: 8px; border: 4px solid transparent; border-top-color: #111; border-bottom: 0; }
.contact { height: 462px; padding-top: 40px; flex: none; }
h1, h2, p { margin: 0; font-weight: 500; }
h1 { font-size: 32.500px; line-height: 44px; letter-spacing: -.45px; text-align: center; }
.cols { display: flex; gap: 20px; width: 1080px; margin: 17px auto 0; }
.col { width: 530px; display: flex; flex-direction: column; align-items: flex-start; }
h2 { font-size: 22.800px; line-height: 28px; letter-spacing: -.3px; margin-bottom: 5px; }
h2.info { letter-spacing: -.5px; }
p { font-weight: 400; margin-bottom: 13.330px; }
.label { letter-spacing: -.33px; }
.address { letter-spacing: -.11px; }
.key { letter-spacing: -.28px; white-space: pre; }
.col a { color: #0d6efd; text-decoration: underline; letter-spacing: -.02px; }
label { margin-bottom: 7.300px; }
input, textarea { width: 530px; height: 32px; margin: 0; border: 1px solid #ced4da; border-radius: 3.330px; background: #fff; padding: 0; }
input { margin-bottom: 12.600px; }
textarea { display: block; height: 72px; resize: none; }
.area { position: relative; margin-bottom: 13px; }
.grip { position: absolute; right: 2px; bottom: 2px; width: 10px; height: 10px; }
button { width: 107px; height: 32px; border: 0; border-radius: 3.330px; background: #0d6efd; color: #fff; font: inherit; letter-spacing: -.25px; padding: 0; white-space: nowrap; }
.page footer { height: 60px; flex: none; background: #f42512; text-align: center; padding-top: 13px; letter-spacing: -.1px; }
.rest { line-height: 8px; }
.sidebar { width: 55px; display: flex; flex-direction: column; align-items: center; padding-top: 16px; }
.sidebar svg { width: 22px; height: 22px; margin-bottom: 28.200px; }
.sidebar .wide { width: 24px; height: 24px; margin: -1px 0 27px; }
.sidebar hr { width: 35px; height: 1px; border: 0; background: #bdbdbd; margin: 1px 0 31px; flex: none; }
.sidebar .add { width: 16px; height: 16px; margin: 0; }
.grow { flex: 1; }
.sidebar hr ~ hr { margin: 0 0 16px; }
.sidebar .gear { margin-bottom: 13px; }

/* taskbar */
.taskbar { height: 60px; flex: none; display: flex; align-items: center; position: relative; background: linear-gradient(90deg, #2a545d 0, #25505f 13%, #244f5b 20%, #234b54 25%, #1a4352 30%, #1c4553 45%, #214b57 58%, #204a58 66%, #26505a 78%, #1a4455 88%, #26505c 97%, #27525c 100%); color: #fff; }
.weather { width: 361.500px; padding-left: 28px; position: relative; }
.weather svg { width: 28px; height: 26px; }
.temp { position: absolute; left: 37px; top: -8px; width: 29px; height: 20px; border-radius: 10px; background: #2c2c2c; font-size: 13px; line-height: 20px; text-align: center; }
.apps { display: flex; }
.app { width: 55px; height: 60px; display: flex; align-items: center; justify-content: center; position: relative; }
.app > svg { width: 30px; height: 30px; }
.app > .win { margin-left: -3px; }
.current::before { content: ""; position: absolute; inset: 5px 2.500px; border-radius: 5px; background: #ffffff14; border: 1px solid #ffffff12; }
.run { position: absolute; bottom: 6px; left: 17.500px; width: 20px; height: 4px; border-radius: 2px; background: #72d5dc; }
.run.dim { left: 23.500px; width: 8px; background: #98a9ae; }
.badge { position: absolute; left: 28.500px; top: 9px; width: 20px; height: 20px; border-radius: 50%; background: #72d3da; color: #10282e; font-size: 13px; line-height: 20px; text-align: center; }
.who { position: absolute; left: 27.500px; top: 15px; width: 15px; height: 15px; border-radius: 50%; background: #5d4037; font-size: 8px; line-height: 15px; text-align: center; }
.tray { margin-left: auto; padding-right: 25px; display: flex; align-items: center; font-size: 14.500px; line-height: 20px; }
.chev { width: 14px; height: 8px; }
.lang { width: 40px; margin-left: 21px; text-align: center; letter-spacing: -.3px; }
.wifi { width: 20px; height: 16px; margin-left: 17px; }
.vol { width: 20px; height: 16px; margin-left: 10px; }
.bat { width: 20px; height: 13px; margin-left: 10px; }
.clock { width: 90px; text-align: right; margin-left: 8px; }
.date { letter-spacing: .2px; }
.bell { width: 16px; height: 19px; margin-left: 11px; }
.pre { position: relative; width: 30px; height: 28px; margin-left: 22px; }
.pre svg { width: 28px; height: 27px; }
.pre span { position: absolute; left: 6px; bottom: -1px; width: 23px; height: 10px; border-radius: 3px; background: #fcc80e; color: #111; font-size: 8px; line-height: 10px; font-weight: 700; text-align: center; letter-spacing: .5px; }
```
